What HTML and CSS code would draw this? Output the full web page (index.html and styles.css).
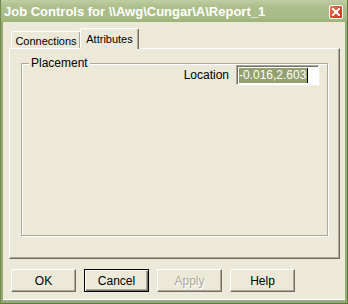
FILE: index.html
```html
<!DOCTYPE html>
<html lang="en">
<head>
    <meta charset="UTF-8">
    <title>Job Controls</title>
    <link rel="stylesheet" href="styles.css">
</head>
<body>
    <div class="window">
        <div class="titlebar">
            <span class="title">Job Controls for \\Awg\Cungar\A\Report_1</span>
            <span class="close">
                <svg width="8" height="8" viewBox="0 0 8 8">
                    <path d="M1 1 L7 7 M7 1 L1 7" stroke="#fff" stroke-width="2" stroke-linecap="square"/>
                </svg>
            </span>
        </div>
        <div class="client">
            <div class="tabs">
                <div class="tab tab-conn">Connections</div>
                <div class="tab active">Attributes</div>
            </div>
            <div class="panel">
                <div class="group">
                    <span class="legend">Placement</span>
                    <div class="field">
                        <label class="field-label">Location</label>
                        <div class="textbox"><span class="sel">-0.016,2.603</span><span class="caret"></span></div>
                    </div>
                </div>
            </div>
            <div class="buttons">
                <div class="btn">OK</div>
                <div class="btn default">Cancel</div>
                <div class="btn disabled">Apply</div>
                <div class="btn">Help</div>
            </div>
        </div>
    </div>
</body>
</html>
```

FILE: styles.css
```css
html, body {
    margin: 0;
    padding: 0;
    background: #ECE9D8;
}
.window {
    width: 348px;
    height: 304px;
    box-sizing: border-box;
    background: #93a971; /* window frame */
    border-left: 1px solid #6f8a4c;
    border-right: 1px solid #5d7a3c;
    border-bottom: 1px solid #5d7a3c;
    display: flex;
    flex-direction: column;
    font-family: "Liberation Sans", Arial, sans-serif;
    font-size: 11px;
    color: #000;
}
.titlebar {
    height: 22px;
    flex: none;
    display: flex;
    align-items: center;
    justify-content: space-between;
    padding: 0 3px 0 3px;
    background: linear-gradient(#bfcea2, #adbf8b 30%, #a8ba85 80%, #9eb278);
}
.title {
    color: #fff;
    font-weight: bold;
    font-size: 13px;
    padding-top: 1px;
}
.close {
    width: 12px;
    height: 12px;
    margin-top: 1px;
    margin-right: 1px;
    border: 1px solid #fff;
    border-radius: 2px;
    background: linear-gradient(135deg, #f07a55, #d8462a 60%, #c43a22);
    display: flex;
    align-items: center;
    justify-content: center;
}
.client {
    flex: 1;
    margin: 0 2px 3px 2px;
    background: #ECE9D8;
    padding: 6px 0 0 6px;
    border-bottom: 1px solid #fff;
    box-shadow: 0 1px 0 #aca899;
}
.tabs {
    display: flex;
    align-items: flex-end;
    height: 20px;
    padding-left: 2px;
    position: relative;
    z-index: 1;
}
.tab {
    height: 17px;
    box-sizing: border-box;
    padding-top: 3px;
    text-align: center;
    border-top: 1px solid #fff;
    border-left: 1px solid #fff;
    border-right: 1px solid #716f64;
    box-shadow: inset -1px 0 0 #aca899;
    border-radius: 2px 2px 0 0;
    background: #ECE9D8;
}
.tab-conn {
    width: 70px;
}
.tab.active {
    width: 59px;
    height: 21px;
    margin-bottom: -1px;
    padding-top: 4px;
    margin-left: -1px;
}
.panel {
    width: 331px;
    height: 211px;
    box-sizing: border-box;
    border-top: 1px solid #fff;
    border-left: 1px solid #fff;
    border-right: 1px solid #716f64;
    border-bottom: 1px solid #716f64;
    box-shadow: inset -1px -1px 0 #aca899;
    padding: 14px 0 0 11px;
}
.group {
    width: 305px;
    height: 171px;
    border: 1px solid #aca899;
    box-shadow: 1px 1px 0 #fff, inset 1px 1px 0 #fff;
}
.legend {
    display: table;
    margin: -7px 0 0 7px;
    padding: 0 2px 0 2px;
    background: #ECE9D8;
    line-height: 13px;
    font-size: 12px;
}
.field {
    display: flex;
    justify-content: flex-end;
    align-items: center;
    padding-right: 8px;
    margin-top: -5px;
}
.field-label {
    margin-right: 7px;
    font-size: 12px;
}
.textbox {
    width: 83px;
    height: 20px;
    box-sizing: border-box;
    background: #fff;
    border-top: 1px solid #aca899;
    border-left: 1px solid #aca899;
    border-right: 1px solid #fff;
    border-bottom: 1px solid #fff;
    box-shadow: inset 1px 1px 0 #716f64, 1px 1px 0 #f1efe2;
    padding: 2px 0 0 2px;
    display: flex;
}
.sel {
    background: #93a070; /* olive highlight */
    color: #fff;
    height: 15px;
    line-height: 15px;
    font-size: 12px;
    padding-right: 1px;
}
.caret {
    width: 1px;
    height: 15px;
    background: #000;
}
.buttons {
    display: flex;
    gap: 8px;
    margin-top: 10px;
    padding-left: 2px;
}
.btn {
    width: 65px;
    height: 23px;
    box-sizing: border-box;
    border-top: 1px solid #fff;
    border-left: 1px solid #fff;
    border-right: 1px solid #716f64;
    border-bottom: 1px solid #716f64;
    box-shadow: inset -1px -1px 0 #aca899;
    display: flex;
    align-items: center;
    justify-content: center;
    font-size: 12px;
}
.btn.default {
    border: 1px solid #000;
    box-shadow: inset 1px 1px 0 #fff, inset -1px -1px 0 #716f64, inset -2px -2px 0 #aca899;
}
.btn.disabled {
    color: #aca899;
    text-shadow: 1px 1px 0 #fff;
}
```
